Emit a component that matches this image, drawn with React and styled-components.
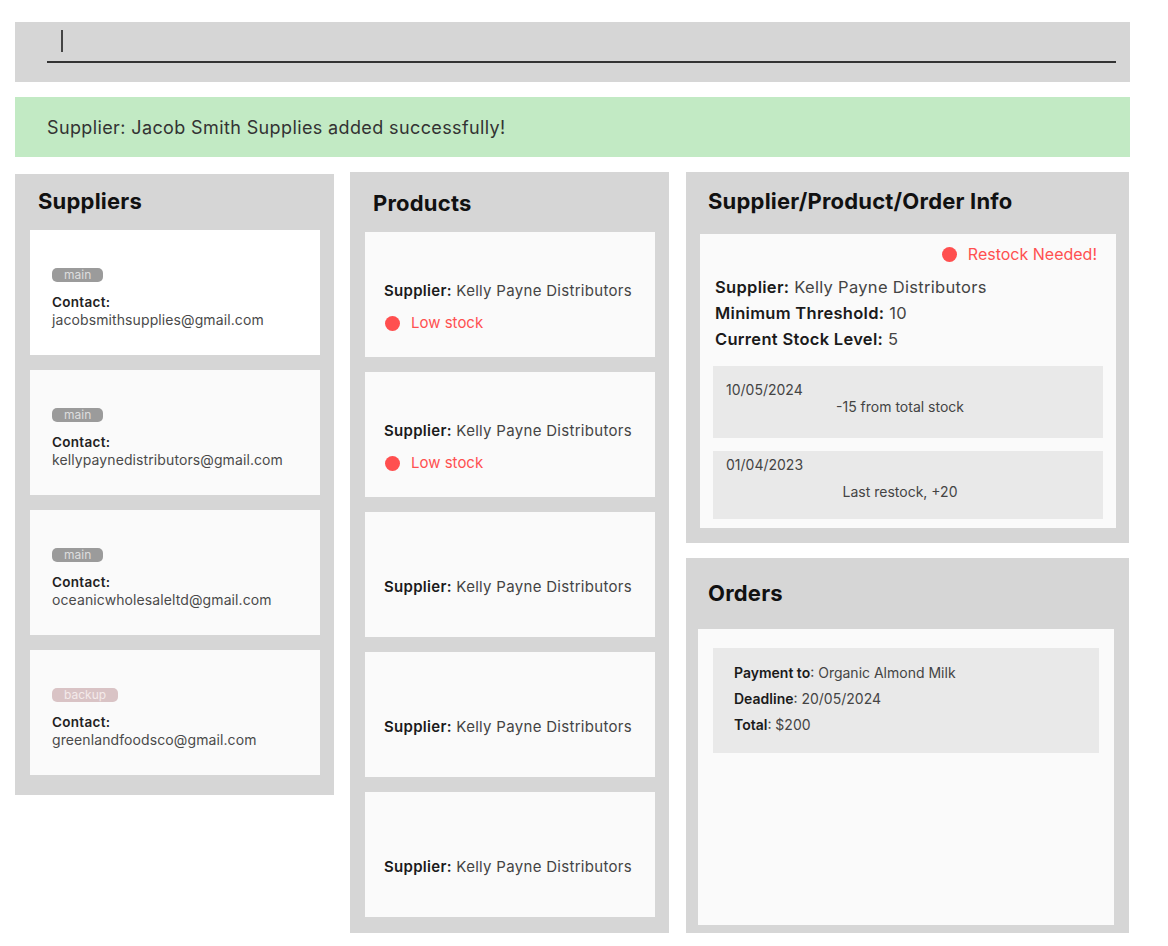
import React from "react";
import styled, { createGlobalStyle } from "styled-components";

const GlobalStyle = createGlobalStyle`
  body {
    margin: 0;
    background: #ffffff;
    font-family: Inter, "Noto Sans", sans-serif;
    color: #222;
  }
`;

const Page = styled.div`
  width: 1115px;
  padding: 22px 0 0 15px;
  display: flex;
  flex-direction: column;
`;

const SearchBar = styled.div`
  height: 60px;
  background: #d6d6d6;
  padding: 0 14px 0 32px;
  box-sizing: border-box;
  display: flex;
  align-items: flex-start;
`;

const SearchField = styled.div`
  flex: 1;
  height: 41px;
  border-bottom: 2px solid #333;
  display: flex;
  align-items: flex-start;
  padding: 8px 0 0 14px;
  box-sizing: border-box;
`;

const Caret = styled.span`
  width: 1.5px;
  height: 22px;
  background: #444;
`;

const Banner = styled.div`
  margin-top: 15px;
  height: 60px;
  background: #c2eac4;
  padding-left: 32px;
  display: flex;
  align-items: center;
  font-size: 18px;
  letter-spacing: 0.38px;
  color: #333;
`;

const Columns = styled.div`
  margin-top: 15px;
  display: grid;
  grid-template-columns: 319px 319px 444px;
  column-gap: 16px;
  align-items: start;
`;

const Panel = styled.section`
  background: #d6d6d6;
  padding: ${(p) => p.$pad};
  margin-top: ${(p) => p.$top || "0"};
  box-sizing: border-box;
  display: flex;
  flex-direction: column;
`;

const RightStack = styled.div`
  display: flex;
  flex-direction: column;
  gap: 15px;
  margin-left: 1px;
`;

const PanelTitle = styled.h2`
  margin: 0 0 ${(p) => p.$mb || "8px"};
  padding-left: ${(p) => p.$indent || "8px"};
  height: 42px;
  display: flex;
  align-items: center;
  font-size: 22px;
  letter-spacing: 0.2px;
  font-weight: 700;
  color: #111;
`;

const CardList = styled.div`
  display: flex;
  flex-direction: column;
  gap: 15px;
`;

const SupplierCard = styled.div`
  height: 125px;
  background: ${(p) => (p.$white ? "#ffffff" : "#fafafa")};
  padding: 12px 22px 0;
  box-sizing: border-box;
  display: flex;
  flex-direction: column;
  justify-content: center;
`;

const Badge = styled.span`
  align-self: flex-start;
  font-size: 12px;
  line-height: 14px;
  padding: 0 12px;
  border-radius: 5px;
  background: ${(p) => (p.$backup ? "#d9c3c5" : "#9b9b9b")};
  color: ${(p) => (p.$backup ? "#f4eaea" : "#dedede")};
  margin-bottom: 11px;
`;

const ContactLabel = styled.div`
  font-size: 13.5px;
  letter-spacing: 0.3px;
  font-weight: 600;
  color: #222;
  line-height: 18px;
`;

const Email = styled.div`
  font-size: 14px;
  letter-spacing: 0.1px;
  color: #4a4a4a;
  line-height: 18px;
`;

const ProductCard = styled.div`
  height: 125px;
  background: #fafafa;
  padding: 25px 19px 0;
  box-sizing: border-box;
  display: flex;
  flex-direction: column;
  justify-content: center;
  gap: 12px;
`;

const Field = styled.div`
  font-size: ${(p) => p.$size || "15px"};
  line-height: ${(p) => p.$lh || "20px"};
  letter-spacing: ${(p) => p.$ls || "0.3px"};
  color: #444;
  white-space: nowrap;
  b {
    font-weight: 600;
    color: #1a1a1a;
  }
`;

const Alert = styled.div`
  display: flex;
  align-items: center;
  gap: 11px;
  font-size: ${(p) => p.$size || "15px"};
  color: #ff5050;
  line-height: 20px;
  justify-content: ${(p) => (p.$right ? "flex-end" : "flex-start")};
  padding-right: ${(p) => (p.$right ? "6px" : "0")};
`;

const Dot = styled.span`
  width: 15px;
  height: 15px;
  border-radius: 50%;
  background: #ff4f4f;
  margin-left: ${(p) => p.$ml || "0"};
`;

const InfoCard = styled.div`
  background: #fafafa;
  padding: 10px 13px 9px;
  display: flex;
  flex-direction: column;
`;

const InfoFields = styled.div`
  padding: 13px 2px 0;
  display: flex;
  flex-direction: column;
  gap: 6px;
  margin-bottom: 17px;
`;

const History = styled.div`
  display: flex;
  flex-direction: column;
  gap: 13px;
`;

const HistoryItem = styled.div`
  height: ${(p) => p.$h};
  background: #e9e9e9;
  padding: ${(p) => p.$pt} 13px 0;
  box-sizing: border-box;
  display: flex;
  flex-direction: column;
  gap: ${(p) => p.$gap};
  font-size: 14px;
  color: #444;
  line-height: 16px;
`;

const HistoryNote = styled.div`
  text-align: center;
  padding-right: 16px;
`;

const OrdersCard = styled.div`
  background: #fafafa;
  height: 296px;
  padding: 19px 15px;
  box-sizing: border-box;
`;

const OrderItem = styled.div`
  background: #e9e9e9;
  height: 105px;
  padding: 16px 21px 0;
  box-sizing: border-box;
  display: flex;
  flex-direction: column;
  gap: 8px;
`;

const suppliers = [
  { email: "jacobsmithsupplies@gmail.com", tag: "main", white: true },
  { email: "kellypaynedistributors@gmail.com", tag: "main" },
  { email: "oceanicwholesaleltd@gmail.com", tag: "main" },
  { email: "greenlandfoodsco@gmail.com", tag: "backup" },
];

const products = [true, true, false, false, false];

export default function App() {
  return (
    <>
      <GlobalStyle />
      <Page>
        <SearchBar>
          <SearchField>
            <Caret />
          </SearchField>
        </SearchBar>
        <Banner>Supplier: Jacob Smith Supplies added successfully!</Banner>
        <Columns>
          <Panel $pad="6px 14px 20px 15px" $top="2px">
            <PanelTitle>Suppliers</PanelTitle>
            <CardList>
              {suppliers.map((s) => (
                <SupplierCard key={s.email} $white={s.white}>
                  <Badge $backup={s.tag === "backup"}>{s.tag}</Badge>
                  <ContactLabel>Contact:</ContactLabel>
                  <Email>{s.email}</Email>
                </SupplierCard>
              ))}
            </CardList>
          </Panel>

          <Panel $pad="10px 14px 16px 15px">
            <PanelTitle>Products</PanelTitle>
            <CardList>
              {products.map((low, i) => (
                <ProductCard key={i}>
                  <Field>
                    <b>Supplier:</b> Kelly Payne Distributors
                  </Field>
                  {low && (
                    <Alert>
                      <Dot $ml="1px" />
                      Low stock
                    </Alert>
                  )}
                </ProductCard>
              ))}
            </CardList>
          </Panel>

          <RightStack>
            <Panel $pad="8px 13px 15px 14px">
              <PanelTitle $mb="12px">Supplier/Product/Order Info</PanelTitle>
              <InfoCard>
                <Alert $right $size="16px">
                  <Dot />
                  Restock Needed!
                </Alert>
                <InfoFields>
                  <Field $size="16.5px">
                    <b>Supplier:</b> Kelly Payne Distributors
                  </Field>
                  <Field $size="16.5px">
                    <b>Minimum Threshold:</b> 10
                  </Field>
                  <Field $size="16.5px">
                    <b>Current Stock Level:</b> 5
                  </Field>
                </InfoFields>
                <History>
                  <HistoryItem $h="72px" $pt="16px" $gap="1px">
                    <div>10/05/2024</div>
                    <HistoryNote>-15 from total stock</HistoryNote>
                  </HistoryItem>
                  <HistoryItem $h="68px" $pt="6px" $gap="11px">
                    <div>01/04/2023</div>
                    <HistoryNote>Last restock, +20</HistoryNote>
                  </HistoryItem>
                </History>
              </InfoCard>
            </Panel>

            <Panel $pad="14px 15px 8px 12px">
              <PanelTitle $mb="15px" $indent="10px">Orders</PanelTitle>
              <OrdersCard>
                <OrderItem>
                  <Field $size="14px" $lh="18px" $ls="0">
                    <b>Payment to</b>: Organic Almond Milk
                  </Field>
                  <Field $size="14px" $lh="18px" $ls="0">
                    <b>Deadline</b>: 20/05/2024
                  </Field>
                  <Field $size="14px" $lh="18px" $ls="0">
                    <b>Total</b>: $200
                  </Field>
                </OrderItem>
              </OrdersCard>
            </Panel>
          </RightStack>
        </Columns>
      </Page>
    </>
  );
}
